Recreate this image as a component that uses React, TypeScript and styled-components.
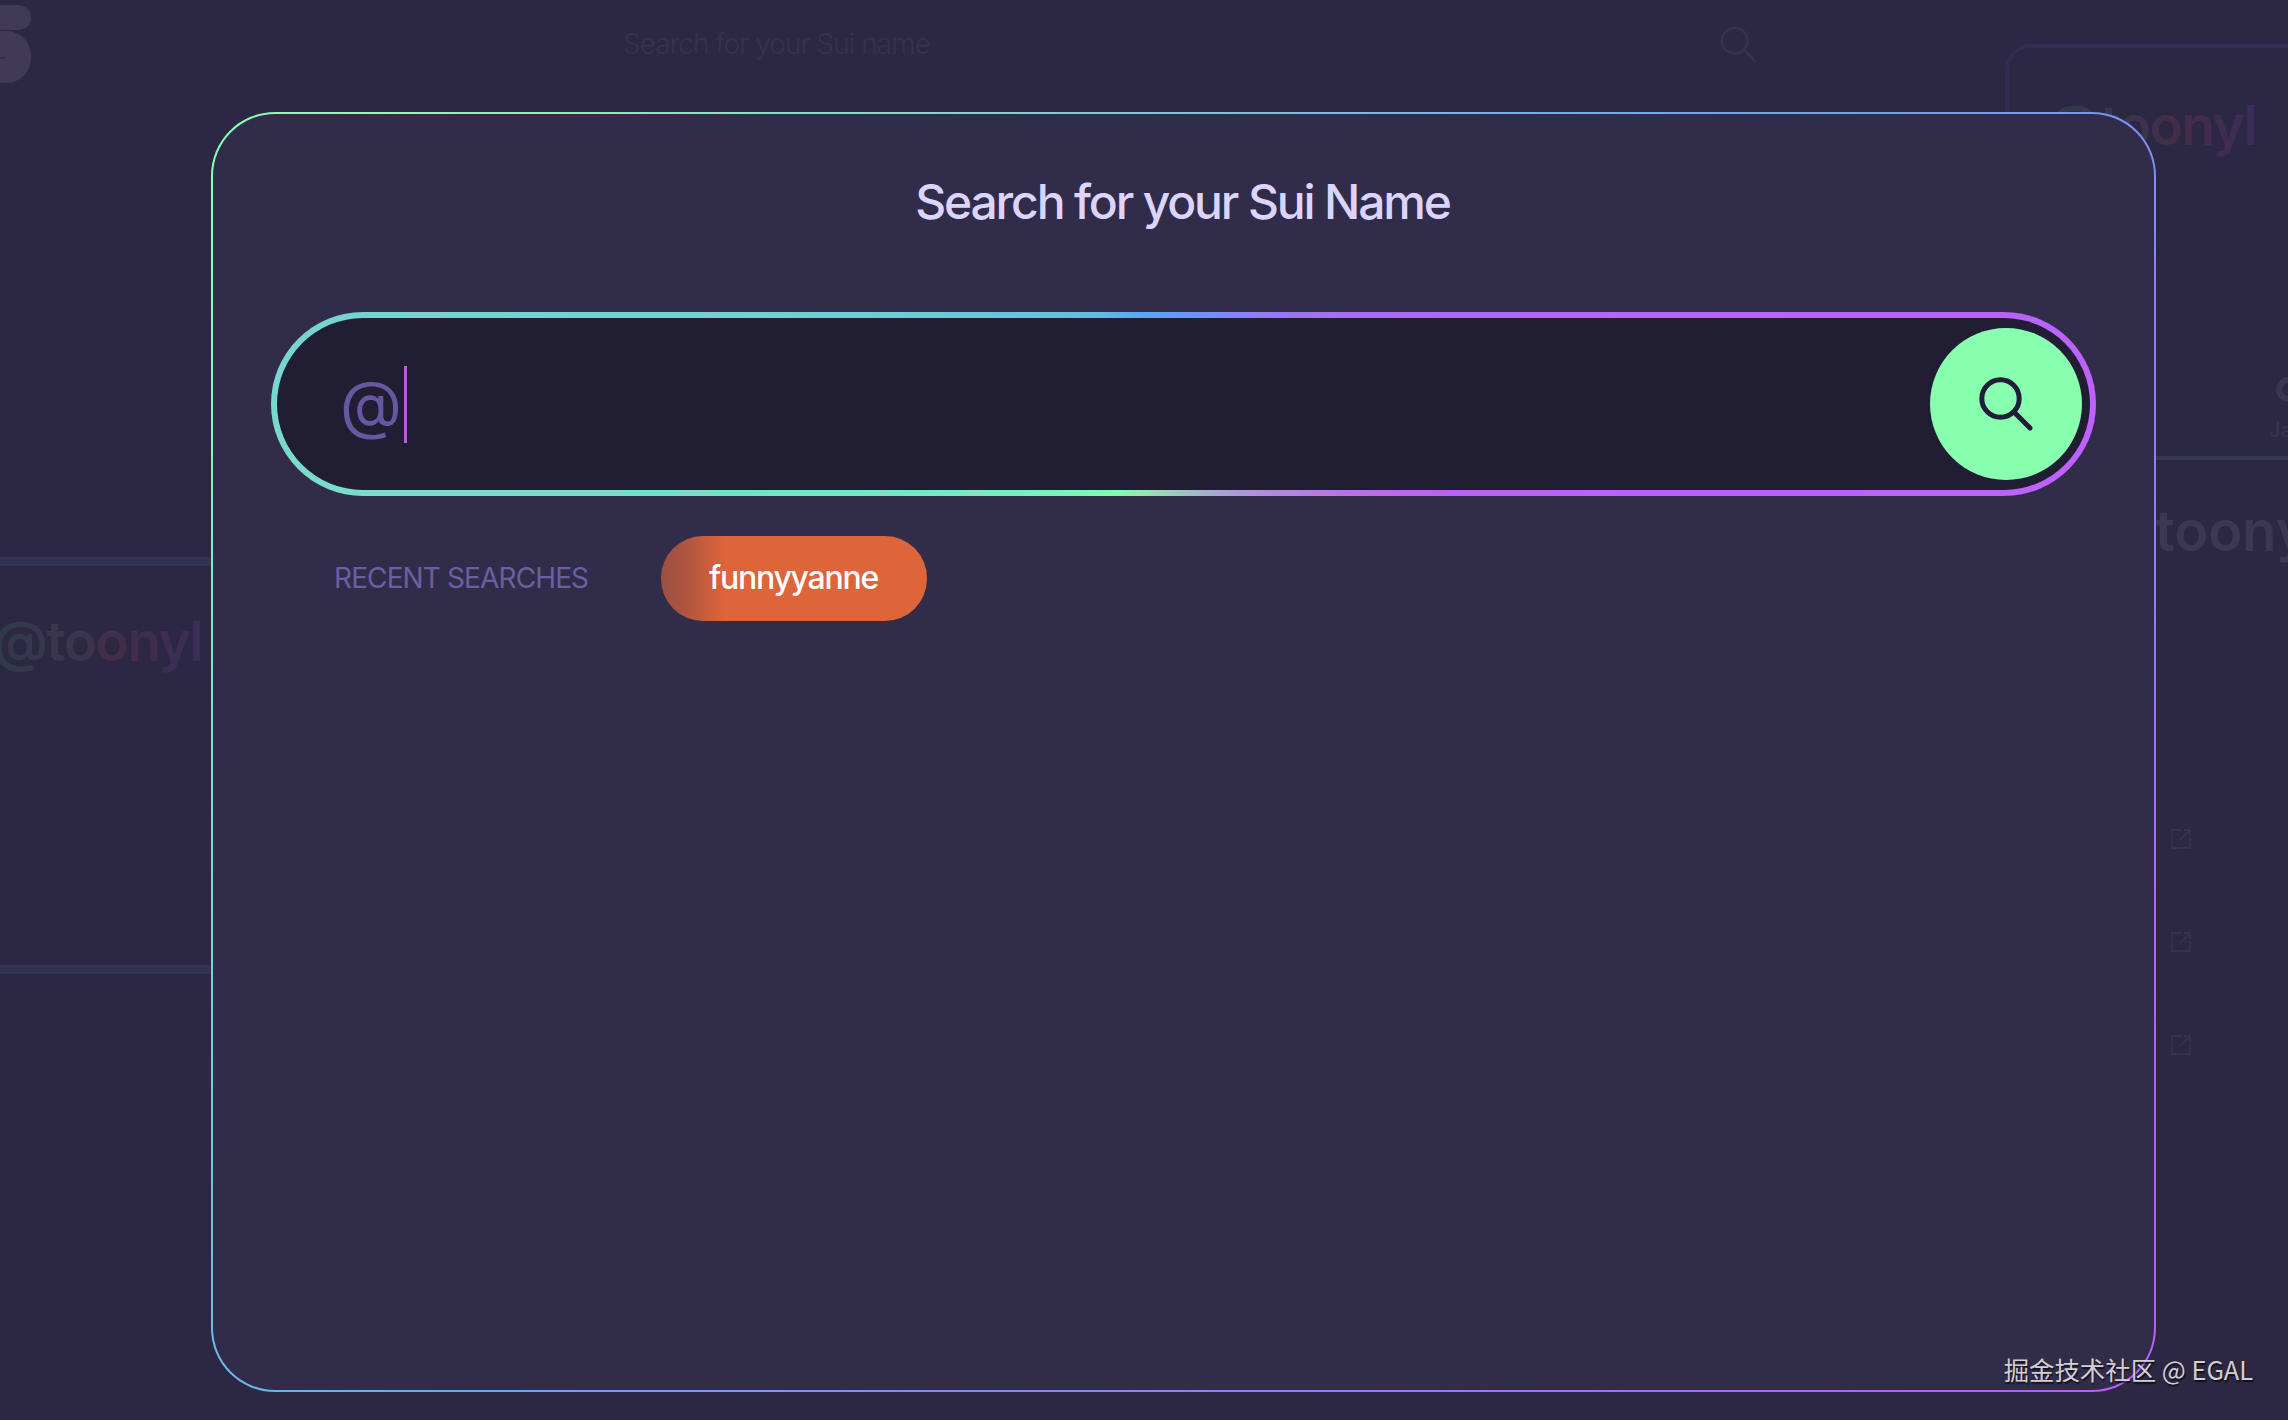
import { createGlobalStyle, styled } from 'styled-components'

const GlobalStyle = createGlobalStyle`
  *, *::before, *::after {
    box-sizing: border-box;
  }

  body {
    margin: 0;
    background: #2c2743;
    font-family: Inter, 'Liberation Sans', sans-serif;
    overflow: hidden;
  }
`

const Screen = styled.div`
  position: relative;
  width: 100vw;
  height: 100vh;
  overflow: hidden;
`

const Page = styled.div`
  display: grid;
  grid-template-columns: 592px 1200px 1fr;
  height: 100%;
  overflow: hidden;
`

const LeftColumn = styled.div`
  display: flex;
  flex-direction: column;
  min-width: 0;
  padding-top: 5px;
`

const Logo = styled.svg`
  display: block;
  width: 31px;
  height: 78px;
`

const PreviewCard = styled.div`
  height: 417px;
  margin-top: 474px;
  padding-top: 41px;
  border-top: 9px solid #313353;
  border-bottom: 9px solid #313353;
`

const GradientName = styled.div<{ $offset?: number }>`
  width: 216px;
  margin-left: ${({ $offset }) => $offset ?? 0}px;
  background: linear-gradient(90deg, #2f3a4b 0%, #3b3550 35%, #432d48 58%, #3f2c50 78%, #3c2c5c 100%);
  background-clip: text;
  -webkit-background-clip: text;
  color: transparent;
  font-size: 55px;
  font-weight: 600;
  line-height: 68px;
  letter-spacing: -1.6px;
  white-space: nowrap;
`

const HeaderSearch = styled.div`
  display: flex;
  align-items: center;
  justify-content: space-between;
  height: 88px;
  padding: 0 35px 0 31px;
  color: #37304f;
  font-size: 28px;
  font-weight: 300;
`

const HeaderPlaceholder = styled.span`
  letter-spacing: -0.95px;
`

const RightColumn = styled.div`
  display: flex;
  flex-direction: column;
  min-width: 0;
  padding-top: 44px;
  overflow: hidden;
`

const NameCard = styled.div`
  flex: none;
  width: 420px;
  height: 260px;
  margin-left: 213px;
  padding: 43px 0 0 38px;
  border: 4px solid #342b53;
  border-bottom: 0;
  border-radius: 26px 26px 0 0;
`

const Profile = styled.div`
  display: flex;
  flex: none;
  flex-direction: column;
  align-items: flex-start;
  height: 156px;
  padding: 73px 0 0 477px;
  border-bottom: 4px solid #343a52;
  color: #3b3552;
  font-size: 20px;
  line-height: 24px;
  white-space: nowrap;
`

const Avatar = styled.div`
  width: 25px;
  height: 25px;
  margin: 0 0 16px 7px;
  border: 6px solid #3b3552;
  border-radius: 50%;
`

const ProfileName = styled.div`
  margin: 37px 0 0 307px;
  color: #3d3654;
  font-size: 56px;
  font-weight: 600;
  line-height: 68px;
  white-space: nowrap;
`

const LinkList = styled.div`
  display: flex;
  flex-direction: column;
  gap: 81px;
  margin: 263px 0 0 378px;
`

const LinkIcon = styled.svg`
  display: block;
  width: 22px;
  height: 22px;
  fill: none;
  stroke: #373050;
  stroke-width: 1.8;
`

const Overlay = styled.div`
  position: absolute;
  inset: 0;
  padding: 112px 132px 28px 211px;
`

const Modal = styled.section`
  display: flex;
  flex-direction: column;
  height: 100%;
  padding: 59px 58px;
  border: 2px solid transparent;
  border-radius: 64px;
  background:
    linear-gradient(#322c4b, #322c4b) padding-box,
    linear-gradient(135deg, #8affb1 4%, #68adf0 45%, #7b90f3 60%, #b95ef6 92%) border-box;
`

const Title = styled.h1`
  margin: 0 2px 0 0;
  color: #dcd5fb;
  font-size: 48px;
  font-weight: 500;
  line-height: 58px;
  letter-spacing: -2.15px;
  text-align: center;
`

const SearchBar = styled.div`
  display: flex;
  flex: none;
  align-items: center;
  height: 184px;
  margin-top: 81px;
  padding: 0 8px 0 63px;
  border: 6px solid transparent;
  border-radius: 92px;
  background:
    linear-gradient(#211d33, #211d33) padding-box,
    conic-gradient(
        #6b98f8 0deg,
        #7a8cf8 20deg,
        #a070f8 56deg,
        #ad68fb 71deg,
        #bd62fa 90deg,
        #bf60f3 109deg,
        #b582e0 128deg,
        #aa9fd6 153deg,
        #98ddb4 198deg,
        #86fbac 217deg,
        #7deac0 243deg,
        #78d8cf 270deg,
        #6cc3d8 297deg,
        #66bbe0 315deg,
        #5fa5f0 334deg,
        #6b98f8 360deg
      )
      border-box;
`

const Prefix = styled.span`
  margin-bottom: 2px;
  color: #6657a0;
  font-size: 64px;
  line-height: 77px;
`

const Caret = styled.span`
  width: 3px;
  height: 77px;
  margin-left: 2px;
  background: #b65fdc;
`

const SearchButton = styled.button`
  display: flex;
  align-items: center;
  justify-content: center;
  width: 152px;
  height: 152px;
  margin-left: auto;
  padding: 0;
  border: 0;
  border-radius: 50%;
  background: #89ffb0;
  color: #201d38;
`

const RecentRow = styled.div`
  display: flex;
  align-items: center;
  margin: 40px 0 0 63px;
`

const RecentLabel = styled.span`
  width: 327px;
  margin-bottom: 2px;
  color: #6a5f9f;
  font-size: 28px;
  letter-spacing: -0.88px;
  text-transform: uppercase;
`

const Chip = styled.span`
  width: 266px;
  height: 85px;
  padding-right: 1px;
  border-radius: 42px;
  background: linear-gradient(90deg, #9c503f 0%, #a8533f 7%, #de643a 24%);
  color: #fff;
  font-size: 32px;
  font-weight: 500;
  line-height: 83px;
  letter-spacing: -1.25px;
  text-align: center;
`

const Watermark = styled.div`
  position: absolute;
  right: 35px;
  bottom: 33px;
  color: #d2ced3;
  font-family: 'Noto Sans CJK SC', sans-serif;
  font-size: 25.4px;
  line-height: 36px;
  text-shadow: 1px 2px 1px rgba(0, 0, 0, 0.6);
  white-space: nowrap;
`

const SearchIcon = ({ size, strokeWidth }: { size: number; strokeWidth: number }) => (
  <svg width={size} height={size} viewBox="0 0 54 54" fill="none" stroke="currentColor" strokeWidth={strokeWidth}>
    <circle cx="21.5" cy="21.5" r="18.7" />
    <path d="M35 35L51 51" strokeLinecap="round" />
  </svg>
)

const links = ['website', 'profile', 'explorer']

const App = () => {
  return (
    <Screen>
      <GlobalStyle />
      <Page>
        <LeftColumn>
          <Logo viewBox="0 0 31 78">
            <path d="M0 0H18C26 0 31 5 31 12.500S26 25 18 25H0Z" fill="#413a56" />
            <path d="M0 26H5C21 26 31 37 31 52S21 78 5 78H0Z" fill="#413a56" />
            <path d="M0 53H5" stroke="#2c2743" strokeWidth="1.500" />
          </Logo>
          <PreviewCard>
            <GradientName $offset={-7}>@toonyl</GradientName>
          </PreviewCard>
        </LeftColumn>
        <HeaderSearch>
          <HeaderPlaceholder>Search for your Sui name</HeaderPlaceholder>
          <SearchIcon size={37} strokeWidth={4} />
        </HeaderSearch>
        <RightColumn>
          <NameCard>
            <GradientName>@toonyl</GradientName>
          </NameCard>
          <Profile>
            <Avatar />
            Ja
          </Profile>
          <ProfileName>@toonyl</ProfileName>
          <LinkList>
            {links.map((link) => (
              <LinkIcon key={link} viewBox="0 0 22 22">
                <path d="M12 2H2V20H20V10M14 2H20V8M20 2L10 12" />
              </LinkIcon>
            ))}
          </LinkList>
        </RightColumn>
      </Page>
      <Overlay>
        <Modal>
          <Title>Search for your Sui Name</Title>
          <SearchBar>
            <Prefix>@</Prefix>
            <Caret />
            <SearchButton aria-label="Search">
              <SearchIcon size={54} strokeWidth={5} />
            </SearchButton>
          </SearchBar>
          <RecentRow>
            <RecentLabel>Recent searches</RecentLabel>
            <Chip>funnyyanne</Chip>
          </RecentRow>
        </Modal>
      </Overlay>
      <Watermark>掘金技术社区 @ EGAL</Watermark>
    </Screen>
  )
}

export default App
